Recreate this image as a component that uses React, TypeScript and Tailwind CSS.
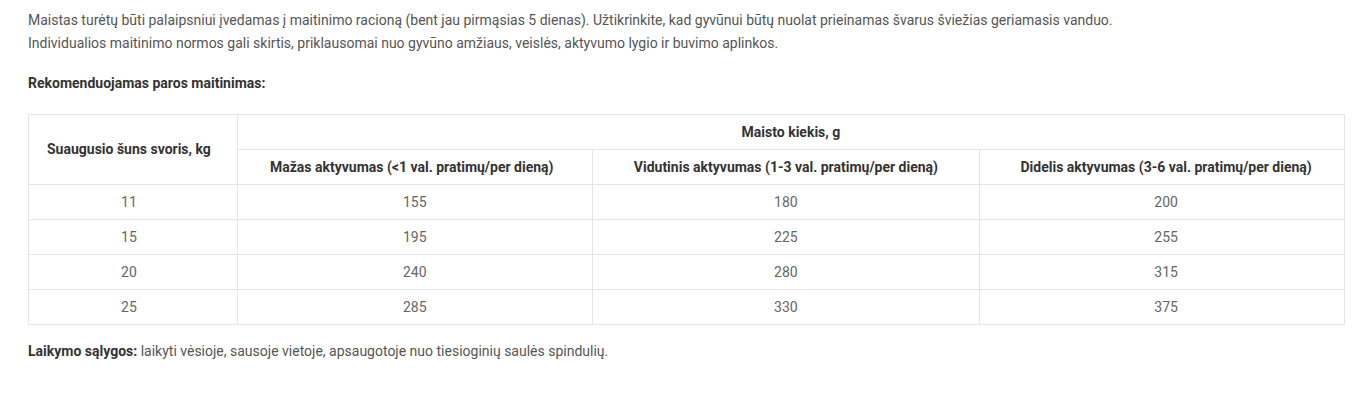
import React from "react";

const rows = [
  ["11", "155", "180", "200"],
  ["15", "195", "225", "255"],
  ["20", "240", "280", "315"],
  ["25", "285", "330", "375"],
];

const tdPad = ["pr-[8px]", "", "", "pl-[8px]"];

export default function App() {
  return (
    <div
      className="bg-white px-[28px] pt-[9px] text-[14px] text-[#555555]"
      style={{ fontFamily: "Roboto, 'Liberation Sans', sans-serif", width: 1365, height: 401 }}
    >
      <p className="leading-[23px]">
        Maistas turėtų būti palaipsniui įvedamas į maitinimo racioną (bent jau pirmąsias 5 dienas). Užtikrinkite, kad gyvūnui būtų nuolat prieinamas švarus šviežias geriamasis vanduo.
        <br />
        Individualios maitinimo normos gali skirtis, priklausomai nuo gyvūno amžiaus, veislės, aktyvumo lygio ir buvimo aplinkos.
      </p>
      <p className="mt-[17px] leading-[23px] font-bold text-[#333333]">Rekomenduojamas paros maitinimas:</p>
      <table className="mt-[19px] w-[1317px] border-collapse text-center">
        <colgroup>
          <col className="w-[209px]" />
          <col className="w-[355px]" />
          <col className="w-[388px]" />
          <col className="w-[365px]" />
        </colgroup>
        <thead className="font-bold text-[#333333]">
          <tr className="h-[35px]">
            <th rowSpan={2} className="border border-[#e6e6e6] pr-[8px] font-bold">
              Suaugusio šuns svoris, kg
            </th>
            <th colSpan={3} className="border border-[#e6e6e6] font-bold">
              Maisto kiekis, g
            </th>
          </tr>
          <tr className="h-[35px]">
            <th className="border border-[#e6e6e6] pr-[6px] font-bold">Mažas aktyvumas (&lt;1 val. pratimų/per dieną)</th>
            <th className="border border-[#e6e6e6] font-bold">Vidutinis aktyvumas (1-3 val. pratimų/per dieną)</th>
            <th className="border border-[#e6e6e6] pl-[8px] font-bold">Didelis aktyvumas (3-6 val. pratimų/per dieną)</th>
          </tr>
        </thead>
        <tbody className="text-[#666666]">
          {rows.map((r) => (
            <tr key={r[0]} className="h-[35px]">
              {r.map((c, i) => (
                <td key={i} className={"border border-[#e6e6e6] " + tdPad[i]}>
                  {c}
                </td>
              ))}
            </tr>
          ))}
        </tbody>
      </table>
      <p className="mt-[15px] leading-[23px]">
        <span className="font-bold text-[#333333]">Laikymo sąlygos:</span> laikyti vėsioje, sausoje vietoje, apsaugotoje nuo tiesioginių saulės spindulių.
      </p>
    </div>
  );
}
